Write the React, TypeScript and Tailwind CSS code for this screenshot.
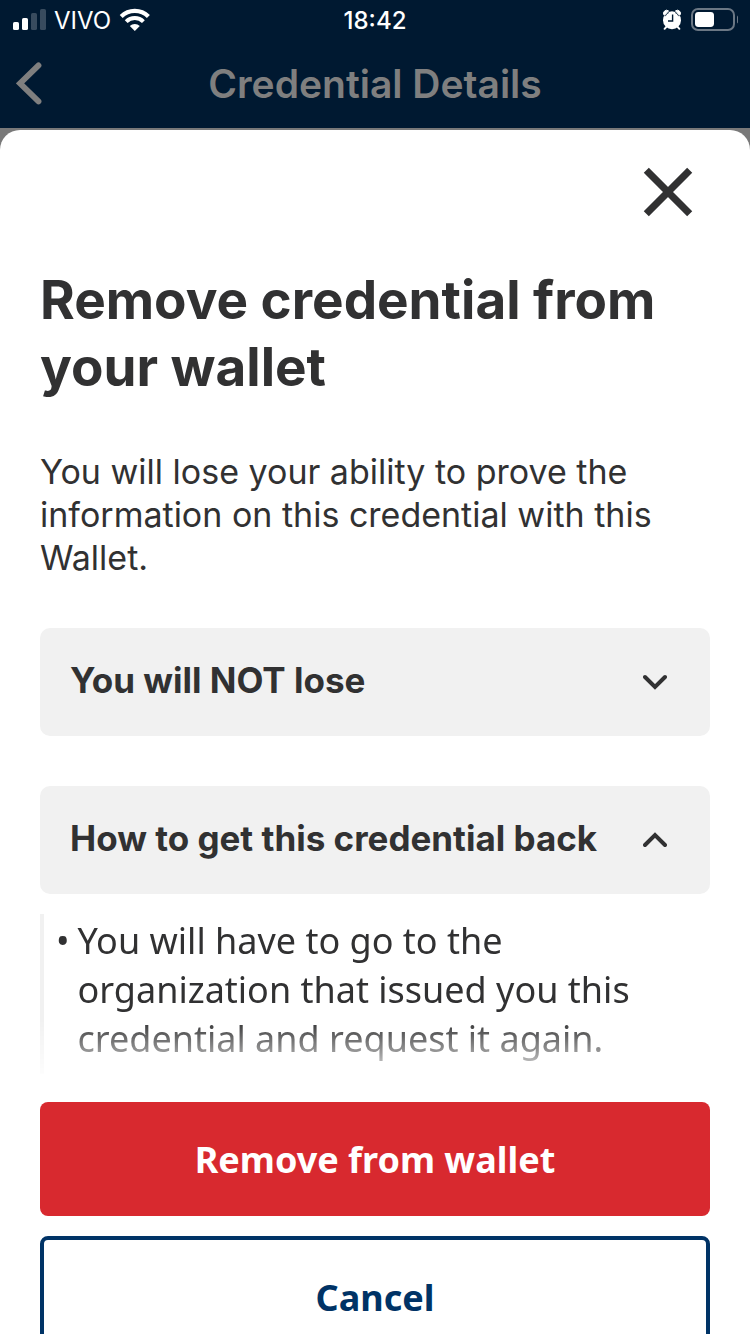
import { useState } from "react";

const sections = [
  { id: "not-lose", title: "You will NOT lose", items: [] as string[] },
  {
    id: "get-back",
    title: "How to get this credential back",
    items: [
      "You will have to go to the organization that issued you this credential and request it again.",
    ],
  },
];

function StatusBar() {
  return (
    <div className="grid h-10 grid-cols-3 items-center px-3 text-white">
      <div className="flex items-center gap-2">
        <svg className="h-6 w-8.5" viewBox="0 0 34 24" fill="currentColor" aria-hidden="true">
          <rect x="1" y="14" width="6" height="8" rx="1.6" />
          <rect x="10" y="10" width="6" height="12" rx="1.6" />
          <rect x="19" y="5" width="6" height="17" rx="1.6" opacity="0.22" />
          <rect x="28" y="1" width="6" height="21" rx="1.6" opacity="0.22" />
        </svg>
        <span className="pt-0.5 text-[24px] leading-7">VIVO</span>
        <svg className="h-6 w-8" viewBox="0 0 32 24" fill="none" stroke="currentColor" aria-hidden="true">
          <path d="M2.2 8.4a19.3 19.3 0 0 1 27.2 0" strokeWidth="4.2" />
          <path d="M7.2 13.6a12.2 12.2 0 0 1 17.2 0" strokeWidth="4" />
          <path d="M15.8 23l-5-5a7.2 7.2 0 0 1 10 0z" fill="currentColor" stroke="none" />
        </svg>
      </div>
      <span className="pt-0.5 text-center text-[24px] font-medium leading-7">18:42</span>
      <div className="flex items-center justify-end gap-1.5">
        <svg className="h-6 w-6" viewBox="0 0 24 24" aria-hidden="true">
          <g fill="#fff">
            <path d="M3.9 6.9A3.1 3.1 0 0 1 8.6 3zM20.1 6.9A3.1 3.1 0 0 0 15.4 3z" stroke="#fff" strokeWidth="1" strokeLinejoin="round" />
            <circle cx="12" cy="12.2" r="9" />
          </g>
          <path d="M6.4 18.8l-1.8 2M17.6 18.8l1.8 2" stroke="#fff" strokeWidth="2" strokeLinecap="round" />
          <path d="M5.2 8.2A8 8 0 0 1 9 4.4M18.8 8.2A8 8 0 0 0 15 4.4" fill="none" stroke="#001931" strokeWidth="0.8" />
          <path d="M12.6 6.6v6.4H8" fill="none" stroke="#001931" strokeWidth="1.4" />
        </svg>
        <svg className="h-6 w-12" viewBox="0 0 48 24" fill="none" aria-hidden="true">
          <rect x="2" y="1" width="42" height="21" rx="6" stroke="#6b7784" strokeWidth="2" />
          <rect x="5" y="4" width="19" height="15" rx="3.4" fill="#fff" />
          <path d="M47 7.5c2.2 1.6 2.2 6.4 0 8z" fill="#6b7784" />
        </svg>
      </div>
    </div>
  );
}

function Chevron({ open }: { open: boolean }) {
  return (
    <svg className="h-6 w-6 shrink-0" viewBox="0 0 24 24" fill="none" stroke="currentColor" strokeWidth="4" strokeLinecap="round" aria-hidden="true">
      <path d={open ? "M2 17L12 7L22 17" : "M2 7L12 17L22 7"} />
    </svg>
  );
}

export default function App() {
  const [open, setOpen] = useState<Record<string, boolean>>({ "get-back": true });

  return (
    <div className="flex h-screen flex-col overflow-hidden bg-[#797979] font-['Inter',sans-serif] text-[#313132]">
      <header className="shrink-0 bg-[#001931]">
        <StatusBar />
        <div className="grid h-22 grid-cols-[60px_1fr_60px] items-center text-[#7f7f7f]">
          <button type="button" aria-label="Back" className="pl-4">
            <svg className="h-11 w-7" viewBox="0 0 28 44" fill="none" stroke="currentColor" strokeWidth="5.8" strokeLinecap="round" aria-hidden="true">
              <path d="M22.5 3.4L4 21.4L22.5 39.4" strokeLinejoin="miter" />
            </svg>
          </button>
          <p className="text-center text-[39px] font-semibold leading-12">Credential Details</p>
        </div>
      </header>

      <main role="dialog" aria-labelledby="dialog-title" className="mt-0.5 flex-1 rounded-t-[20px] bg-white px-10">
        <div className="flex justify-end pr-4 pt-9">
          <button type="button" aria-label="Close">
            <svg className="h-13 w-13" viewBox="0 0 52 52" stroke="currentColor" strokeWidth="7.2" aria-hidden="true">
              <path d="M4.3 4.3L47.7 47.7M47.7 4.3L4.3 47.7" />
            </svg>
          </button>
        </div>

        <h1 id="dialog-title" className="mt-[49px] text-[53px] font-bold leading-[67px]">
          Remove credential from your wallet
        </h1>
        <p className="mt-[49px] text-[34px] leading-[43px]">
          You will lose your ability to prove the information on this credential with this Wallet.
        </p>

        <div className="mt-[49px] flex flex-col gap-[50px]">
          {sections.map((s) => (
            <section key={s.id}>
              <h2>
                <button
                  type="button"
                  aria-expanded={!!open[s.id]}
                  onClick={() => setOpen({ ...open, [s.id]: !open[s.id] })}
                  className="flex h-27 w-full items-center justify-between rounded-[10px] bg-[#f1f1f1] pl-[30px] pr-[43px] text-left text-[35px] font-bold leading-[43px]"
                >
                  <span className="pb-1">{s.title}</span>
                  <Chevron open={!!open[s.id]} />
                </button>
              </h2>
              {open[s.id] && s.items.length > 0 && (
                <div className="mt-5 h-40 overflow-hidden border-l-4 border-[#f1f1f1] mask-[linear-gradient(to_bottom,#000_106px,transparent_170px)] pl-3 font-['Noto_Sans',sans-serif] text-[36px] leading-[49px]">
                  <ul>
                    {s.items.map((item) => (
                      <li key={item} className="flex gap-2 pt-0.5">
                        <span aria-hidden="true">•</span>
                        <span>{item}</span>
                      </li>
                    ))}
                  </ul>
                </div>
              )}
            </section>
          ))}
        </div>

        <div className="mt-7 flex flex-col gap-5 font-['Noto_Sans',sans-serif] text-[36px] font-bold leading-12">
          <button type="button" className="h-[114px] rounded-lg bg-[#d8292f] pt-0.5 text-white">
            Remove from wallet
          </button>
          <button type="button" className="h-[122px] rounded-lg border-4 border-[#003366] pt-0.5 text-[#003366]">
            Cancel
          </button>
        </div>
      </main>
    </div>
  );
}
